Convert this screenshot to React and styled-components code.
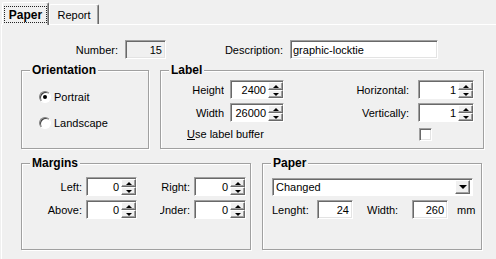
import React from 'react';
import styled, { createGlobalStyle } from 'styled-components';

const GlobalStyle = createGlobalStyle`
  html, body {
    margin: 0;
    padding: 0;
    background: #f0f0f0;
  }
  body {
    font-family: "Liberation Sans", Arial, sans-serif;
    font-size: 11px;
    color: #000;
  }
`;

const Screen = styled.div`
  width: 496px;
  height: 259px;
  overflow: hidden;
  background: #f0f0f0;
`;

const TabStrip = styled.div`
  display: flex;
  align-items: flex-end;
  height: 24px;
  padding-left: 2px;
  position: relative;
  z-index: 1;
`;

const Tab = styled.div`
  box-sizing: border-box;
  width: ${({ $w }) => $w}px;
  height: ${({ $active }) => ($active ? '23px' : '20px')};
  margin-bottom: ${({ $active }) => ($active ? '-1px' : '0')};
  display: flex;
  align-items: center;
  justify-content: center;
  background: #f0f0f0;
  border-top: 1px solid #fff;
  border-left: 1px solid #fff;
  border-right: 1px solid #696969;
  box-shadow: inset -1px 0 0 #a0a0a0;
  border-radius: 2px 2px 0 0;
  font-size: ${({ $active }) => ($active ? '12px' : '11px')};
  font-weight: ${({ $active }) => ($active ? 'bold' : 'normal')};
`;

const FocusLabel = styled.span`
  box-sizing: border-box;
  width: 43px;
  height: 17px;
  margin-top: 1px;
  display: flex;
  align-items: center;
  justify-content: center;
  border: 1px dotted #222;
`;

const Page = styled.div`
  box-sizing: border-box;
  height: 235px;
  margin-left: 1px;
  border-top: 1px solid #fff;
  border-left: 1px solid #fff;
`;

const TopRow = styled.div`
  display: flex;
  align-items: center;
  height: 19px;
  margin-top: 15px;
`;

const RowLabel = styled.span`
  width: ${({ $w }) => $w}px;
  margin-left: ${({ $lead }) => $lead || 0}px;
  margin-right: ${({ $gap }) => $gap || 0}px;
  text-align: ${({ $left }) => ($left ? 'left' : 'right')};
  white-space: nowrap;
`;

const TextBox = styled.div`
  box-sizing: border-box;
  width: ${({ $w }) => $w}px;
  height: ${({ $h }) => $h || 19}px;
  display: flex;
  align-items: center;
  justify-content: ${({ $right }) => ($right ? 'flex-end' : 'flex-start')};
  padding: 0 3px 0 2px;
  background: ${({ $readOnly }) => ($readOnly ? '#f0f0f0' : '#fff')};
  border: 1px solid;
  border-color: #a0a0a0 #fff #fff #a0a0a0;
  box-shadow: inset 1px 1px 0 #696969, inset -1px -1px 0 #e3e3e3;
  white-space: nowrap;
`;

const GroupRow = styled.div`
  display: flex;
  gap: 11px;
  padding-left: 19px;
  margin-top: ${({ $top }) => $top}px;
`;

const Group = styled.fieldset`
  box-sizing: border-box;
  width: ${({ $w }) => $w}px;
  height: ${({ $h }) => $h}px;
  min-width: 0;
  margin: 0;
  padding: 0;
  border: 1px solid #a0a0a0;
  box-shadow: inset 1px 1px 0 #fff, 1px 1px 0 #fff;
`;

const Legend = styled.legend`
  margin-left: 8px;
  padding: 0 2px;
  font-size: 12px;
  font-weight: bold;
  line-height: 14px;
  background: #f0f0f0;
`;

const RadioList = styled.div`
  display: flex;
  flex-direction: column;
  gap: 10px;
  padding: 12px 0 0 17px;
`;

const RadioRow = styled.label`
  display: flex;
  align-items: center;
  height: 16px;
  gap: 3px;
`;

const RadioCircle = styled.span`
  box-sizing: border-box;
  width: 12px;
  height: 12px;
  border-radius: 50%;
  background: #fff;
  border: 1px solid;
  border-color: #808080 #fff #fff #808080;
  box-shadow: inset 1px 1px 0 #404040;
  display: flex;
  align-items: center;
  justify-content: center;

  &::after {
    content: "";
    width: 4px;
    height: 4px;
    border-radius: 50%;
    background: ${({ $checked }) => ($checked ? '#000' : 'transparent')};
  }
`;

const LabelGrid = styled.div`
  display: grid;
  grid-template-columns: 63px 54px 1fr 56px;
  grid-auto-rows: 19px;
  column-gap: 6px;
  row-gap: 4px;
  align-items: center;
  padding: 3px 9px 0 0;
`;

const CellLabel = styled.span`
  display: flex;
  justify-content: flex-end;
  overflow: hidden;
  white-space: nowrap;
  padding-right: ${({ $pad }) => $pad || 0}px;
  margin-left: ${({ $clip }) => $clip || 0}px;
`;

const BufferLabel = styled.span`
  grid-column: 1 / 4;
  padding-left: 26px;
  align-self: start;
  margin-top: 2px;
`;

const CheckBox = styled.span`
  box-sizing: border-box;
  width: 13px;
  height: 13px;
  margin-left: 1px;
  align-self: start;
  margin-top: 2px;
  background: #fff;
  border: 1px solid;
  border-color: #a0a0a0 #fff #fff #a0a0a0;
  box-shadow: inset 1px 1px 0 #696969, inset -1px -1px 0 #e3e3e3;
`;

const MarginGrid = styled.div`
  display: grid;
  grid-template-columns: 60px 51px 49px 52px;
  grid-auto-rows: 19px;
  column-gap: 4px;
  row-gap: 4px;
  align-items: center;
  padding-top: 7px;
`;

const SpinField = styled.div`
  box-sizing: border-box;
  width: ${({ $w }) => $w}px;
  height: 19px;
  display: flex;
  background: #fff;
  border: 1px solid;
  border-color: #a0a0a0 #fff #fff #a0a0a0;
  box-shadow: inset 1px 1px 0 #696969;
`;

const SpinValue = styled.span`
  flex: 1;
  display: flex;
  align-items: center;
  justify-content: flex-end;
  padding: 1px 2px 0 0;
`;

const SpinButtons = styled.div`
  width: 15px;
  display: flex;
  flex-direction: column;
  padding-top: 1px;
`;

const ArrowButton = styled.div`
  box-sizing: border-box;
  flex: 1;
  display: flex;
  align-items: center;
  justify-content: center;
  background: #f0f0f0;
  border: 1px solid;
  border-color: #fff #696969 #696969 #fff;
  box-shadow: inset -1px -1px 0 #a0a0a0;

  &::after {
    content: "";
    width: 0;
    height: 0;
    border-left: 3px solid transparent;
    border-right: 3px solid transparent;
    ${({ $down }) => ($down ? 'border-top: 3px solid #000;' : 'border-bottom: 3px solid #000;')}
  }
`;

const PaperBody = styled.div`
  display: flex;
  flex-direction: column;
  gap: 4px;
  padding: 8px 0 0 9px;
`;

const Select = styled.div`
  box-sizing: border-box;
  width: 201px;
  height: 18px;
  display: flex;
  align-items: center;
  padding: 2px;
  background: #fff;
  border: 1px solid;
  border-color: #a0a0a0 #fff #fff #a0a0a0;
  box-shadow: inset 1px 1px 0 #696969;
`;

const SelectText = styled.span`
  flex: 1;
  padding-left: 1px;
`;

const DropButton = styled(ArrowButton)`
  flex: none;
  width: 15px;
  height: 14px;

  &::after {
    border-left-width: 4px;
    border-right-width: 4px;
    border-top-width: 4px;
  }
`;

const SizeRow = styled.div`
  display: flex;
  align-items: center;
  height: 19px;
`;

const Unit = styled.span`
  margin-left: 9px;
`;

const SpinBox = ({ w, value }) => (
  <SpinField $w={w}>
    <SpinValue>{value}</SpinValue>
    <SpinButtons>
      <ArrowButton />
      <ArrowButton $down />
    </SpinButtons>
  </SpinField>
);

export default function App() {
  return (
    <Screen>
      <GlobalStyle />
      <TabStrip>
        <Tab $active $w={47}>
          <FocusLabel>Paper</FocusLabel>
        </Tab>
        <Tab $w={50}>Report</Tab>
      </TabStrip>
      <Page>
        <TopRow>
          <RowLabel $w={116} $gap={7}>Number:</RowLabel>
          <TextBox $w={41} $right $readOnly>15</TextBox>
          <RowLabel $w={117} $gap={7}>Description:</RowLabel>
          <TextBox $w={148}>graphic-locktie</TextBox>
        </TopRow>

        <GroupRow $top={4}>
          <Group $w={128} $h={86}>
            <Legend>Orientation</Legend>
            <RadioList>
              <RadioRow>
                <RadioCircle $checked />
                Portrait
              </RadioRow>
              <RadioRow>
                <RadioCircle />
                Landscape
              </RadioRow>
            </RadioList>
          </Group>
          <Group $w={324} $h={86}>
            <Legend>Label</Legend>
            <LabelGrid>
              <CellLabel>Height</CellLabel>
              <SpinBox w={54} value="2400" />
              <CellLabel $pad={3}>Horizontal:</CellLabel>
              <SpinBox w={56} value="1" />
              <CellLabel>Width</CellLabel>
              <SpinBox w={54} value="26000" />
              <CellLabel $pad={3}>Vertically:</CellLabel>
              <SpinBox w={56} value="1" />
              <BufferLabel>
                <u>U</u>se label buffer
              </BufferLabel>
              <CheckBox />
            </LabelGrid>
          </Group>
        </GroupRow>

        <GroupRow $top={7}>
          <Group $w={230} $h={94}>
            <Legend>Margins</Legend>
            <MarginGrid>
              <CellLabel>Left:</CellLabel>
              <SpinBox w={51} value="0" />
              <CellLabel>Right:</CellLabel>
              <SpinBox w={52} value="0" />
              <CellLabel>Above:</CellLabel>
              <SpinBox w={51} value="0" />
              <CellLabel $clip={19}>Under:</CellLabel>
              <SpinBox w={52} value="0" />
            </MarginGrid>
          </Group>
          <Group $w={220} $h={94}>
            <Legend>Paper</Legend>
            <PaperBody>
              <Select>
                <SelectText>Changed</SelectText>
                <DropButton $down />
              </Select>
              <SizeRow>
                <RowLabel $w={45} $left>Lenght:</RowLabel>
                <TextBox $w={36} $right>24</TextBox>
                <RowLabel $w={45} $left $lead={14}>Width:</RowLabel>
                <TextBox $w={36} $right>260</TextBox>
                <Unit>mm</Unit>
              </SizeRow>
            </PaperBody>
          </Group>
        </GroupRow>
      </Page>
    </Screen>
  );
}
